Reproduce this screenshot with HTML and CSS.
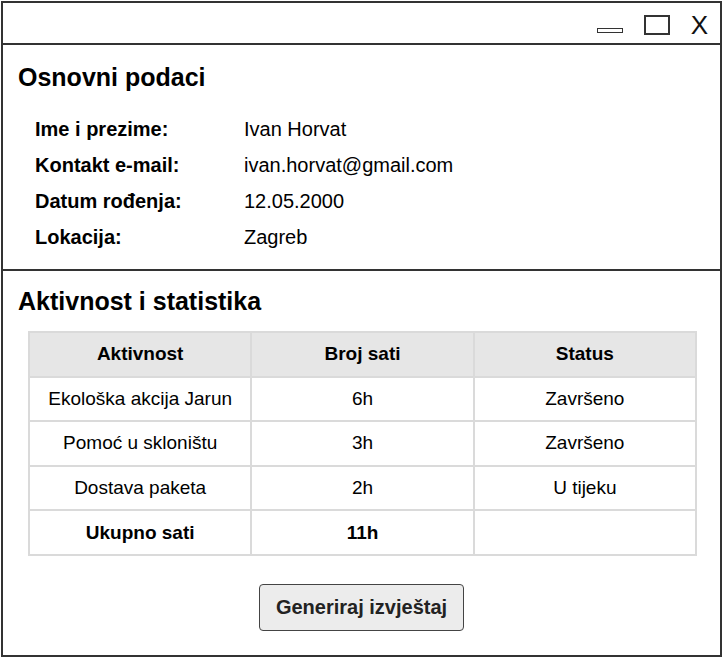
FILE: index.html
```html
<!DOCTYPE html>
<html lang="hr">
<head>
<meta charset="utf-8">
<title>Profil</title>
<link rel="stylesheet" href="styles.css">
</head>
<body>
<div class="window">
  <div class="titlebar">
    <span class="btn-min"></span>
    <span class="btn-max"></span>
    <span class="btn-close">X</span>
  </div>
  <section class="section section-info">
    <h2 class="section-title">Osnovni podaci</h2>
    <div class="info-list">
      <div class="info-row"><span class="info-label">Ime i prezime:</span><span class="info-value">Ivan Horvat</span></div>
      <div class="info-row"><span class="info-label">Kontakt e-mail:</span><span class="info-value">ivan.horvat@gmail.com</span></div>
      <div class="info-row"><span class="info-label">Datum rođenja:</span><span class="info-value">12.05.2000</span></div>
      <div class="info-row"><span class="info-label">Lokacija:</span><span class="info-value">Zagreb</span></div>
    </div>
  </section>
  <section class="section section-stats">
    <h2 class="section-title">Aktivnost i statistika</h2>
    <table class="stats-table">
      <thead>
        <tr><th>Aktivnost</th><th>Broj sati</th><th>Status</th></tr>
      </thead>
      <tbody>
        <tr><td>Ekološka akcija Jarun</td><td>6h</td><td>Završeno</td></tr>
        <tr><td>Pomoć u skloništu</td><td>3h</td><td>Završeno</td></tr>
        <tr><td>Dostava paketa</td><td>2h</td><td>U tijeku</td></tr>
        <tr class="total-row"><td>Ukupno sati</td><td>11h</td><td></td></tr>
      </tbody>
    </table>
    <div class="actions">
      <button class="report-btn" type="button">Generiraj izvještaj</button>
    </div>
  </section>
</div>
</body>
</html>
```

FILE: styles.css
```css
* {
  box-sizing: border-box;
}

html, body {
  margin: 0;
  padding: 0;
  background: #ffffff;
}

body {
  font-family: "Liberation Sans", Arial, sans-serif;
  color: #000;
}

.window {
  margin: 1px 0 0 1px;
  width: 721px;
  height: 656px;
  border: 2px solid #333;
  display: flex;
  flex-direction: column;
}

.titlebar {
  height: 42px;
  flex: none;
  border-bottom: 2px solid #333;
  display: flex;
  justify-content: flex-end;
  align-items: flex-start;
  gap: 21px;
  padding: 12px 12px 0 0;
}

.btn-min {
  display: block;
  width: 26px;
  height: 5px;
  margin-top: 13px;
  border: 1.5px solid #333;
}

.btn-max {
  display: block;
  width: 26px;
  height: 20px;
  border: 2px solid #333;
}

.btn-close {
  display: block;
  font-size: 26px;
  line-height: 20px;
  color: #111;
}

.section {
  padding: 0 15px;
}

.section-info {
  padding-top: 18px;
  padding-bottom: 14px;
  border-bottom: 2px solid #333;
}

.section-stats {
  padding-top: 16px;
}

.section-title {
  margin: 0;
  font-size: 25px;
  line-height: 28px;
  font-weight: bold;
}

.info-list {
  margin-top: 20px;
  padding-left: 17px;
}

.info-row {
  display: flex;
  height: 36px;
  line-height: 36px;
  font-size: 20px;
}

.info-label {
  width: 209px;
  font-weight: bold;
}

.stats-table {
  margin: 16px 0 0 10px;
  width: 669px;
  table-layout: fixed;
  border-collapse: collapse;
  font-size: 19px;
}

.stats-table tr {
  height: 44.6px;
}

.stats-table th,
.stats-table td {
  border: 2px solid #dadada;
  padding: 0;
  text-align: center;
  vertical-align: middle;
}

.stats-table th {
  background: #e6e6e6;
  font-weight: bold;
}

.total-row td {
  font-weight: bold;
}

.actions {
  display: flex;
  justify-content: center;
  margin-top: 28px;
}

.report-btn {
  width: 205px;
  height: 47px;
  padding: 0;
  border: 1.5px solid #444;
  border-radius: 4px;
  background: #ececec;
  color: #222;
  font-family: "Liberation Sans", Arial, sans-serif;
  font-size: 20px;
  font-weight: bold;
}
```
